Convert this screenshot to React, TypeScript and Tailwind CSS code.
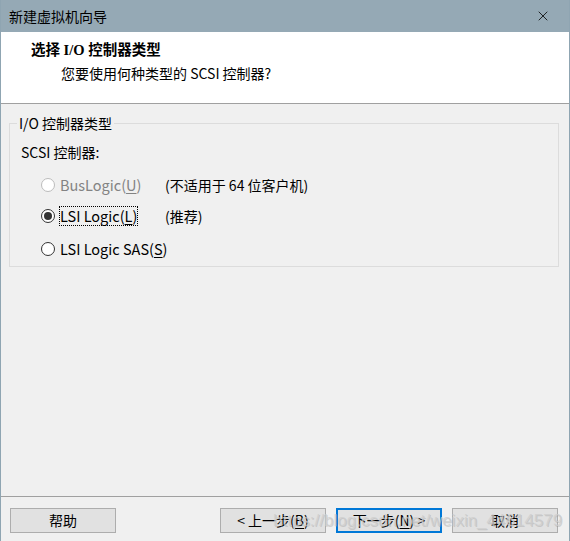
import { X } from "lucide-react";

type RadioProps = {
  label: string;
  hotkey: string;
  suffix?: string;
  note?: string;
  checked?: boolean;
  disabled?: boolean;
  focused?: boolean;
  className?: string;
};

const Radio = ({ label, hotkey, suffix = ")", note, checked, disabled, focused, className }: RadioProps) => {
  return (
    <div className={"flex items-center h-[18px] " + (className ?? "")}>
      <div className="min-w-[124px] shrink-0 flex items-center whitespace-nowrap">
        <span
          className={
            "w-[14px] h-[14px] rounded-full border flex items-center justify-center bg-white " +
            (disabled ? "border-[#bcbcbc]" : "border-[#333333]")
          }
        >
          {checked && <span className="w-[8px] h-[8px] rounded-full bg-[#333333]" />}
        </span>
        <span
          className={
            "ml-[5px] leading-[18px] text-[14.5px] " +
            (disabled ? "text-[#838383]" : "text-black") +
            (focused ? " outline outline-1 outline-dotted outline-black" : "")
          }
        >
          {label}
          <span className="underline underline-offset-2">{hotkey}</span>
          {suffix}
        </span>
      </div>
      {note && <span className="text-black whitespace-nowrap">{note}</span>}
    </div>
  );
};

const Button = ({ children, primary }: { children: React.ReactNode; primary?: boolean }) => (
  <button
    className={
      "w-[106px] h-[25px] flex items-center justify-center bg-[#e1e1e1] text-black text-[14px] " +
      (primary ? "border-2 border-[#0078d7]" : "border border-[#adadad]")
    }
  >
    {children}
  </button>
);

export default function App() {
  return (
    <div className="w-[570px] h-[541px] flex flex-col bg-[#f0f0f0] border-l border-r border-[#8fa5b2] font-['Noto_Sans_CJK_SC','Noto_Sans',sans-serif] text-[14px] text-black relative overflow-hidden">
      {/* title bar */}
      <div className="h-[32px] bg-[#95a9b5] flex items-center justify-between pl-[8px] pr-[18px] shrink-0">
        <span className="text-[14px] leading-none text-black">新建虚拟机向导</span>
        <X size={16} strokeWidth={1.2} className="text-black" />
      </div>

      {/* header */}
      <div className="h-[72px] bg-white border-b border-[#a0a0a0] pt-[9px] shrink-0">
        <div className="pl-[30px] leading-[18px] font-bold font-['Liberation_Serif','Noto_Sans_CJK_SC',serif] text-[14.5px]">
          选择 I/O 控制器类型
        </div>
        <div className="pl-[60px] mt-[5px] leading-[18px]">您要使用何种类型的 SCSI 控制器?</div>
      </div>

      {/* body */}
      <div className="flex-1 px-[8px] pt-[10px]">
        <fieldset className="border border-[#dcdcdc] w-[550px] pl-[11px] pb-[8px]">
          <legend className="ml-[-4px] px-[2px] leading-[18px]">I/O 控制器类型</legend>
          <div className="mt-[11px] leading-[18px]">SCSI 控制器:</div>
          <div className="pl-[20px]">
            <Radio className="mt-[15px]" label="BusLogic(" hotkey="U" note="(不适用于 64 位客户机)" disabled />
            <Radio className="mt-[13px]" label="LSI Logic(" hotkey="L" note="(推荐)" checked focused />
            <Radio className="mt-[15px]" label="LSI Logic SAS(" hotkey="S" />
          </div>
        </fieldset>
      </div>

      {/* footer */}
      <div className="h-[45px] border-t border-[#a0a0a0] shrink-0 flex items-start pt-[11px] pl-[9px] pr-[11px] relative">
        <Button>帮助</Button>
        <div className="ml-auto flex">
          <Button>
            &lt; 上一步(<span className="underline underline-offset-2">B</span>)
          </Button>
          <div className="ml-[10px]">
            <Button primary>
              下一步(<span className="underline underline-offset-2">N</span>) &gt;
            </Button>
          </div>
          <div className="ml-[10px]">
            <Button>取消</Button>
          </div>
        </div>
        <span className="absolute left-[272px] top-[13px] pointer-events-none whitespace-nowrap font-['Liberation_Sans',sans-serif] text-[17px] leading-[22px] text-[rgba(205,205,205,0.75)] [text-shadow:1px_1px_0_rgba(150,150,150,0.35)]">
          https://blog.csdn.net/weixin_44614579
        </span>
      </div>
    </div>
  );
}
